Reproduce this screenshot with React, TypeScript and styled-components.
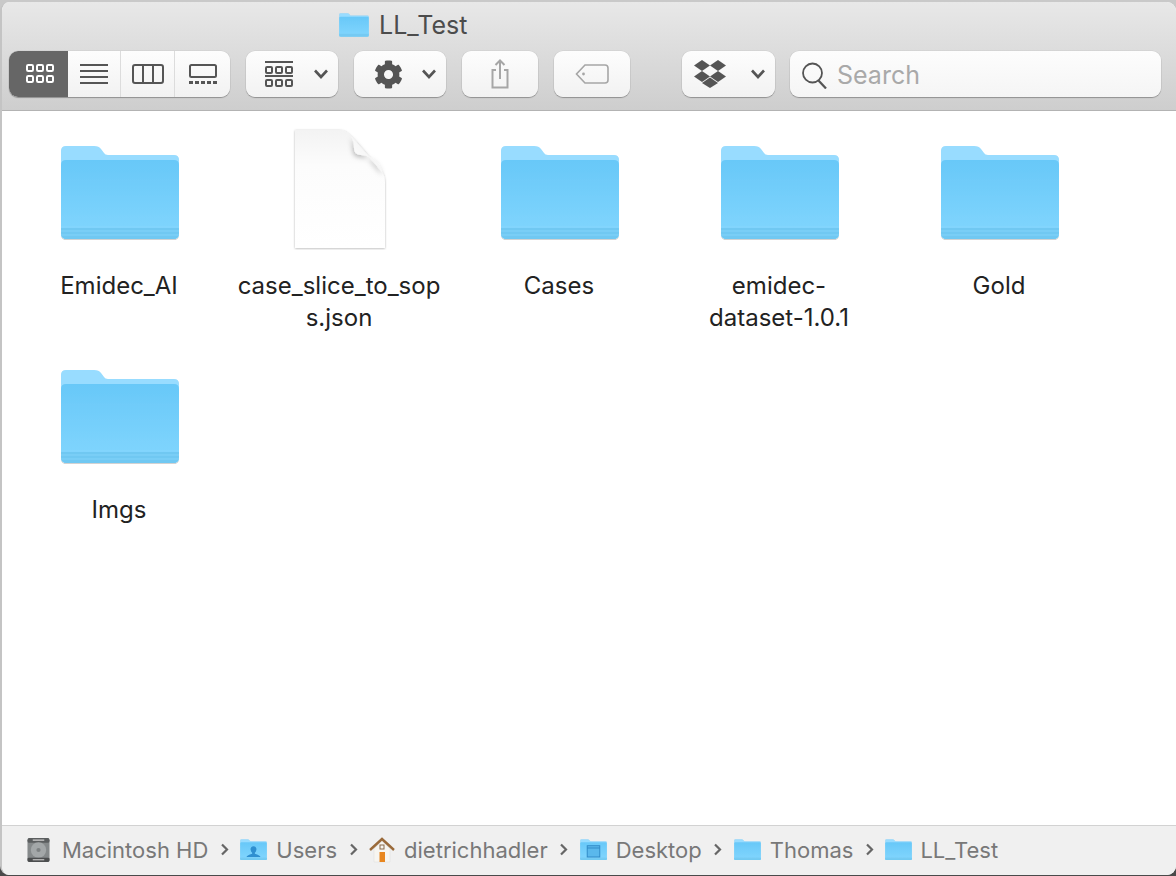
import React, { useId } from "react";
import styled, { createGlobalStyle } from "styled-components";
import { FaCog } from "react-icons/fa";

const Global = createGlobalStyle`
  html, body { margin: 0; padding: 0; background: #d4d4d4; }
  body { font-family: Inter, "Liberation Sans", sans-serif; overflow: hidden; }
`;

const Page = styled.div`
  width: 1176px;
  height: 876px;
  padding-top: 2px;
  box-sizing: border-box;
  display: flex;
  flex-direction: column;
  background: linear-gradient(#c9c9c9 0, #c9c9c9 860px, #4a4a4a 860px);
`;

const Window = styled.div`
  flex: 1;
  margin-bottom: 1px;
  display: flex;
  flex-direction: column;
  border-radius: 9px;
  overflow: hidden;
  border-left: 2px solid #c4c4c4;
  background: #fff;
`;

const Header = styled.header`
  height: 109px;
  flex: none;
  box-sizing: border-box;
  margin-left: -2px;
  padding: 0 15px 0 9px;
  display: flex;
  flex-direction: column;
  background: linear-gradient(#e8e8e8, #cecece);
  border-bottom: 1px solid #b3b3b3;
`;

const TitleRow = styled.div`
  height: 49px;
  box-sizing: border-box;
  padding: 0 0 3px 330px;
  display: flex;
  align-items: center;
  gap: 10px;
`;

const Title = styled.h1`
  margin: 0;
  font-size: 25px;
  font-weight: 400;
  color: #4c4c4c;
  line-height: 1;
`;

const Toolbar = styled.div`
  display: flex;
  align-items: center;
  height: 46px;
`;

const Segmented = styled.div`
  display: flex;
  height: 46px;
  width: 221px;
  border-radius: 9px;
  overflow: hidden;
  box-shadow: 0 1px 1px rgba(0, 0, 0, 0.28), 0 0 0 0.5px rgba(0, 0, 0, 0.07);
  background: linear-gradient(#fdfdfd, #f2f2f2);
`;

const Segment = styled.button<{ $w: number; $active?: boolean }>`
  width: ${(p) => p.$w}px;
  flex: none;
  padding: 0 0 0 ${(p) => (p.$active ? "3px" : "0")};
  border: 0;
  border-right: ${(p) => (p.$active ? "0" : "1px solid #dcdcdc")};
  background: ${(p) => (p.$active ? "#666666" : "transparent")};
  display: flex;
  align-items: center;
  justify-content: center;
  &:last-child { border-right: 0; }
`;

const ToolButton = styled.button<{ $w: number; $ml: number; $pl?: number; $faded?: boolean }>`
  width: ${(p) => p.$w}px;
  margin-left: ${(p) => p.$ml}px;
  height: 46px;
  flex: none;
  box-sizing: border-box;
  padding: 0 ${(p) => (p.$pl !== undefined ? `9px 0 ${p.$pl}px` : "0")};
  border: 0;
  border-radius: 9px;
  display: flex;
  align-items: center;
  justify-content: ${(p) => (p.$pl !== undefined ? "space-between" : "center")};
  background: linear-gradient(#fdfdfd, #f2f2f2);
  box-shadow: 0 1px 1px rgba(0, 0, 0, 0.28), 0 0 0 0.5px rgba(0, 0, 0, 0.07);
`;

const SearchBox = styled.div`
  width: 371px;
  height: 46px;
  margin-left: 15px;
  box-sizing: border-box;
  padding: 3px 0 0 12px;
  display: flex;
  align-items: center;
  gap: 10px;
  border-radius: 9px;
  background: linear-gradient(#fdfdfd, #f5f5f5);
  box-shadow: 0 1px 1px rgba(0, 0, 0, 0.28), 0 0 0 0.5px rgba(0, 0, 0, 0.07);
`;

const SearchText = styled.span`
  font-size: 25px;
  color: #a9a9a9;
  line-height: 1;
`;

const Files = styled.main`
  flex: 1;
  box-sizing: border-box;
  padding: 0 0 0 8px;
  display: grid;
  grid-template-columns: repeat(5, 220px);
  grid-auto-rows: 224px;
  align-content: start;
  background: #fff;
`;

const FileItem = styled.div`
  display: flex;
  flex-direction: column;
  align-items: center;
`;

const IconSlot = styled.div<{ $doc?: boolean }>`
  height: 159px;
  box-sizing: border-box;
  padding-top: ${(p) => (p.$doc ? 17 : 34)}px;
  flex: none;
  display: flex;
  align-items: flex-start;
  justify-content: center;
`;

const FileName = styled.div`
  width: 210px;
  text-align: center;
  font-size: 24px;
  line-height: 32px;
  color: #222;
  word-break: break-all;
  margin-left: -2px;
`;

const PathBar = styled.footer`
  height: 50px;
  flex: none;
  box-sizing: border-box;
  padding: 0 0 2px 25px;
  display: flex;
  align-items: center;
  background: #f0f0f0;
  border-top: 1px solid #d2d2d2;
`;

const Crumb = styled.div<{ $gap?: number }>`
  display: flex;
  align-items: center;
  gap: ${(p) => p.$gap ?? 9}px;
  font-size: 22px;
  color: #787878;
`;

const Sep = styled.span`
  display: flex;
  align-items: center;
  width: 32px;
  justify-content: center;
`;

const Gear = styled(FaCog)`
  color: #555;
`;

const Chevron = () => (
  <svg width="16" height="14" viewBox="0 0 16 14" fill="none" stroke="#555" strokeWidth="2.6">
    <path d="M2 3.5 L8 10 L14 3.5" />
  </svg>
);

const SepIcon = () => (
  <svg width="9" height="13" viewBox="0 0 9 13" fill="none" stroke="#666" strokeWidth="2.2">
    <path d="M2 1.5 L7 6.5 L2 11.5" />
  </svg>
);

const IconGrid = ({ color }: { color: string }) => (
  <svg width="28" height="20" viewBox="0 0 28 20" fill="none" stroke={color} strokeWidth="2">
    {[1, 11, 21].map((x) =>
      [1, 12].map((y) => <rect key={`${x}${y}`} x={x} y={y} width="6" height="6" rx="1.3" />)
    )}
  </svg>
);

const IconList = () => (
  <svg width="28" height="20" viewBox="0 0 28 20" fill="#555">
    <rect y="0" width="28" height="2" />
    <rect y="6" width="28" height="2" />
    <rect y="12" width="28" height="2" />
    <rect y="18" width="28" height="2" />
  </svg>
);

const IconColumns = () => (
  <svg width="32" height="20" viewBox="0 0 32 20" fill="none" stroke="#555" strokeWidth="2">
    <rect x="1" y="1" width="30" height="18" rx="2" />
    <path d="M11 1 V19 M21 1 V19" />
  </svg>
);

const IconGallery = () => (
  <svg width="28" height="20" viewBox="0 0 28 20">
    <rect x="1" y="1" width="26" height="12" rx="1.5" fill="none" stroke="#555" strokeWidth="2" />
    {[0, 6, 12, 18, 24].map((x) => (
      <rect key={x} x={x} y="17" width="4" height="3" fill="#555" />
    ))}
  </svg>
);

const IconGroup = () => (
  <svg width="28" height="26" viewBox="0 0 28 26" fill="none" stroke="#555" strokeWidth="2">
    <path d="M0 1 H28 M0 15 H28" />
    {[1, 11, 21].map((x) =>
      [6, 19].map((y) => <rect key={`${x}${y}`} x={x} y={y} width="6" height="6" rx="1" />)
    )}
  </svg>
);

const IconShare = () => (
  <svg width="18" height="30" viewBox="0 0 18 30" fill="none" stroke="#a6a6a6" strokeWidth="2">
    <path d="M5 11 H1.5 V28.5 H16.5 V11 H13" />
    <path d="M9 20 V1.5 M4.5 6 L9 1.5 L13.5 6" />
  </svg>
);

const IconTag = () => (
  <svg width="34" height="20" viewBox="0 0 34 20" fill="none" stroke="#a6a6a6" strokeWidth="1.6">
    <path d="M10 1 H30 Q33 1 33 4 V16 Q33 19 30 19 H10 L1.5 10 Z" />
    <circle cx="8.5" cy="10" r="1.4" fill="#a6a6a6" stroke="none" />
  </svg>
);

const IconDropbox = () => (
  <svg width="32" height="28" viewBox="0 0 32 28" fill="#555">
    <polygon points="8,0 16,5.5 8,11 0,5.5" />
    <polygon points="24,0 32,5.5 24,11 16,5.5" />
    <polygon points="8,11 16,16.5 8,22 0,16.5" />
    <polygon points="24,11 32,16.5 24,22 16,16.5" />
    <polygon points="16,17.5 24,23 16,28 8,23" />
  </svg>
);

const IconSearch = () => (
  <svg width="25" height="27" viewBox="0 0 25 27" fill="none" stroke="#555" strokeWidth="1.8">
    <circle cx="10.5" cy="11" r="9.5" />
    <path d="M16.5 18.5 L24 26.5" strokeWidth="2.2" />
  </svg>
);

const Folder = ({ width = 120, children }: { width?: number; children?: React.ReactNode }) => {
  const id = useId();
  return (
    <svg width={width} height={width * 0.8} viewBox="0 0 120 96">
      <defs>
        <linearGradient id={`${id}f`} x1="0" x2="0" y1="0" y2="1">
          <stop offset="0" stopColor="#68c8f8" />
          <stop offset="1" stopColor="#82d6fe" />
        </linearGradient>
        <filter id={`${id}s`} x="-5%" y="-5%" width="110%" height="110%">
          <feDropShadow dx="0" dy="0.8" stdDeviation="0.7" floodColor="#000" floodOpacity="0.22" />
        </filter>
      </defs>
      <g filter={`url(#${id}s)`}>
        <path
          d="M1 6 Q1 1 6 1 H34 Q39 1 41 4 L44 8 Q45 10 48 10 H114 Q119 10 119 15 V88 Q119 94 113 94 H7 Q1 94 1 88 Z"
          fill="#98dcff"
        />
        <path d="M1 20 Q1 15 6 15 H114 Q119 15 119 20 V88 Q119 94 113 94 H7 Q1 94 1 88 Z" fill={`url(#${id}f)`} />
        <path d="M1 83 H119 V88 Q119 94 113 94 H7 Q1 94 1 88 Z" fill="#70c8f2" />
        <path d="M1 82 H119 M1 86 H119 M1 90 H119" stroke="#88d6fc" strokeWidth="0.8" />
      </g>
      {children}
    </svg>
  );
};

const DocIcon = () => {
  const id = useId();
  return (
    <svg width="94" height="122" viewBox="0 0 94 122">
      <defs>
        <linearGradient id={`${id}d`} x1="0" x2="0" y1="0" y2="1">
          <stop offset="0" stopColor="#f3f3f3" />
          <stop offset="0.3" stopColor="#fcfcfc" />
          <stop offset="1" stopColor="#ffffff" />
        </linearGradient>
        <linearGradient id={`${id}c`} x1="0" x2="1" y1="1" y2="0">
          <stop offset="0" stopColor="#ffffff" />
          <stop offset="1" stopColor="#efefef" />
        </linearGradient>
        <filter id={`${id}s`} x="-5%" y="-5%" width="110%" height="110%">
          <feDropShadow dx="0" dy="0.6" stdDeviation="0.8" floodColor="#000" floodOpacity="0.3" />
        </filter>
        <filter id={`${id}t`} x="-30%" y="-30%" width="160%" height="160%">
          <feDropShadow dx="-1" dy="2" stdDeviation="2.5" floodColor="#000" floodOpacity="0.28" />
        </filter>
      </defs>
      <path
        d="M2 2 H46 Q53 2 58 8 L86 40 Q92 46 92 54 V120 H2 Z"
        fill={`url(#${id}d)`}
        filter={`url(#${id}s)`}
      />
      <path
        d="M58 8 L90 45 Q85 28 68 27 Q61 27 61 20 Q61 13 58 8 Z"
        fill={`url(#${id}c)`}
        filter={`url(#${id}t)`}
      />
    </svg>
  );
};

const DiskIcon = () => (
  <svg width="23" height="26" viewBox="0 0 24 26">
    <rect x="0.5" y="0.5" width="23" height="25" rx="2.5" fill="#85898a" />
    <rect x="0.5" y="0.5" width="23" height="5" rx="2" fill="#5b5e5f" />
    <rect x="6" y="2" width="12" height="1.4" fill="#c9c9c9" />
    <circle cx="12" cy="13" r="8" fill="#a3a7a8" />
    <circle cx="12" cy="13" r="2.2" fill="#7d8182" />
    <rect x="0.5" y="21" width="23" height="4.5" rx="1.5" fill="#4c4e4f" />
    <rect x="6" y="22.5" width="12" height="1.3" fill="#bbbbbb" />
  </svg>
);

const HomeIcon = () => (
  <svg width="26" height="26" viewBox="0 0 26 26">
    <path d="M5 12 L13 4 L21 12 V25 H5 Z" fill="#f7f5f0" stroke="#ddd" strokeWidth="0.5" />
    <path d="M1 13 L13 2 L25 13" fill="none" stroke="#9a6a3a" strokeWidth="2.4" />
    <rect x="10.5" y="15" width="5.5" height="10" fill="#e8861e" />
    <rect x="11" y="8" width="4" height="4" fill="none" stroke="#8a6a4a" strokeWidth="1" />
  </svg>
);

const smallFolderWidth = 27;

const items = ["Emidec_AI", "case_slice_to_sops.json", "Cases", "emidec-dataset-1.0.1", "Gold", "Imgs"];

export default function App() {
  return (
    <Page>
      <Global />
      <Window>
        <Header>
          <TitleRow>
            <Folder width={30} />
            <Title>LL_Test</Title>
          </TitleRow>
          <Toolbar>
            <Segmented>
              <Segment $w={59} $active>
                <IconGrid color="#fff" />
              </Segment>
              <Segment $w={53}>
                <IconList />
              </Segment>
              <Segment $w={54}>
                <IconColumns />
              </Segment>
              <Segment $w={55}>
                <IconGallery />
              </Segment>
            </Segmented>
            <ToolButton $w={92} $ml={16} $pl={19}>
              <IconGroup />
              <Chevron />
            </ToolButton>
            <ToolButton $w={92} $ml={16} $pl={20}>
              <Gear size={29} />
              <Chevron />
            </ToolButton>
            <ToolButton $w={76} $ml={16} $faded>
              <IconShare />
            </ToolButton>
            <ToolButton $w={76} $ml={16} $faded>
              <IconTag />
            </ToolButton>
            <ToolButton $w={93} $ml={52} $pl={12}>
              <IconDropbox />
              <Chevron />
            </ToolButton>
            <SearchBox>
              <IconSearch />
              <SearchText>Search</SearchText>
            </SearchBox>
          </Toolbar>
        </Header>
        <Files>
          {items.map((name, i) => (
            <FileItem key={name}>
              <IconSlot $doc={i === 1}>{i === 1 ? <DocIcon /> : <Folder />}</IconSlot>
              <FileName>
                {name === "emidec-dataset-1.0.1" ? (
                  <>
                    emidec-
                    <br />
                    dataset-1.0.1
                  </>
                ) : (
                  name
                )}
              </FileName>
            </FileItem>
          ))}
        </Files>
        <PathBar>
          <Crumb $gap={12}>
            <DiskIcon />
            Macintosh HD
          </Crumb>
          <Sep>
            <SepIcon />
          </Sep>
          <Crumb>
            <Folder width={smallFolderWidth}>
              <path
                d="M60 32 a13 13 0 0 1 13 15 q-1 10 -7 14 v5 q14 3 24 11 v3 H30 v-3 q10 -8 24 -11 v-5 q-6 -4 -7 -14 a13 13 0 0 1 13 -15 Z"
                fill="#2f8fd0"
              />
            </Folder>
            Users
          </Crumb>
          <Sep>
            <SepIcon />
          </Sep>
          <Crumb>
            <HomeIcon />
            dietrichhadler
          </Crumb>
          <Sep>
            <SepIcon />
          </Sep>
          <Crumb>
            <Folder width={smallFolderWidth}>
              <rect x="32" y="30" width="56" height="50" fill="#5ab8ec" stroke="#2c86c4" strokeWidth="4" />
              <path d="M32 40 H88" stroke="#2c86c4" strokeWidth="4" />
            </Folder>
            Desktop
          </Crumb>
          <Sep>
            <SepIcon />
          </Sep>
          <Crumb>
            <Folder width={smallFolderWidth} />
            Thomas
          </Crumb>
          <Sep>
            <SepIcon />
          </Sep>
          <Crumb $gap={8}>
            <Folder width={smallFolderWidth} />
            LL_Test
          </Crumb>
        </PathBar>
      </Window>
    </Page>
  );
}
